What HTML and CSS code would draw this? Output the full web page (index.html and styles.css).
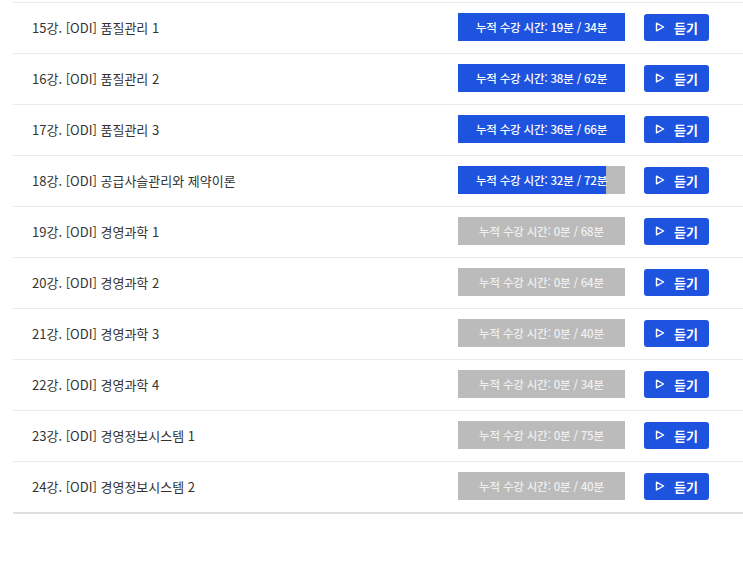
FILE: index.html
```html
<!DOCTYPE html>
<html lang="ko">
<head>
<meta charset="utf-8">
<link rel="stylesheet" href="styles.css">
</head>
<body>
<ul class="list">
  <li class="row"><span class="title">15강. [ODI] 품질관리 1</span><div class="bar"><div class="fill" style="width:100%"></div><span class="bar-text">누적 수강 시간: 19분 / 34분</span></div><button class="play"><svg width="10" height="10" viewBox="0 0 10 10"><path d="M1.5 1.2 L8.6 5 L1.5 8.8 Z" fill="none" stroke="#fff" stroke-width="1.4" stroke-linejoin="round"/></svg><span>듣기</span></button></li>
  <li class="row"><span class="title">16강. [ODI] 품질관리 2</span><div class="bar"><div class="fill" style="width:100%"></div><span class="bar-text">누적 수강 시간: 38분 / 62분</span></div><button class="play"><svg width="10" height="10" viewBox="0 0 10 10"><path d="M1.5 1.2 L8.6 5 L1.5 8.8 Z" fill="none" stroke="#fff" stroke-width="1.4" stroke-linejoin="round"/></svg><span>듣기</span></button></li>
  <li class="row"><span class="title">17강. [ODI] 품질관리 3</span><div class="bar"><div class="fill" style="width:100%"></div><span class="bar-text">누적 수강 시간: 36분 / 66분</span></div><button class="play"><svg width="10" height="10" viewBox="0 0 10 10"><path d="M1.5 1.2 L8.6 5 L1.5 8.8 Z" fill="none" stroke="#fff" stroke-width="1.4" stroke-linejoin="round"/></svg><span>듣기</span></button></li>
  <li class="row"><span class="title">18강. [ODI] 공급사슬관리와 제약이론</span><div class="bar"><div class="fill" style="width:88.6%"></div><span class="bar-text">누적 수강 시간: 32분 / 72분</span></div><button class="play"><svg width="10" height="10" viewBox="0 0 10 10"><path d="M1.5 1.2 L8.6 5 L1.5 8.8 Z" fill="none" stroke="#fff" stroke-width="1.4" stroke-linejoin="round"/></svg><span>듣기</span></button></li>
  <li class="row"><span class="title">19강. [ODI] 경영과학 1</span><div class="bar"><div class="fill" style="width:0%"></div><span class="bar-text dim">누적 수강 시간: 0분 / 68분</span></div><button class="play"><svg width="10" height="10" viewBox="0 0 10 10"><path d="M1.5 1.2 L8.6 5 L1.5 8.8 Z" fill="none" stroke="#fff" stroke-width="1.4" stroke-linejoin="round"/></svg><span>듣기</span></button></li>
  <li class="row"><span class="title">20강. [ODI] 경영과학 2</span><div class="bar"><div class="fill" style="width:0%"></div><span class="bar-text dim">누적 수강 시간: 0분 / 64분</span></div><button class="play"><svg width="10" height="10" viewBox="0 0 10 10"><path d="M1.5 1.2 L8.6 5 L1.5 8.8 Z" fill="none" stroke="#fff" stroke-width="1.4" stroke-linejoin="round"/></svg><span>듣기</span></button></li>
  <li class="row"><span class="title">21강. [ODI] 경영과학 3</span><div class="bar"><div class="fill" style="width:0%"></div><span class="bar-text dim">누적 수강 시간: 0분 / 40분</span></div><button class="play"><svg width="10" height="10" viewBox="0 0 10 10"><path d="M1.5 1.2 L8.6 5 L1.5 8.8 Z" fill="none" stroke="#fff" stroke-width="1.4" stroke-linejoin="round"/></svg><span>듣기</span></button></li>
  <li class="row"><span class="title">22강. [ODI] 경영과학 4</span><div class="bar"><div class="fill" style="width:0%"></div><span class="bar-text dim">누적 수강 시간: 0분 / 34분</span></div><button class="play"><svg width="10" height="10" viewBox="0 0 10 10"><path d="M1.5 1.2 L8.6 5 L1.5 8.8 Z" fill="none" stroke="#fff" stroke-width="1.4" stroke-linejoin="round"/></svg><span>듣기</span></button></li>
  <li class="row"><span class="title">23강. [ODI] 경영정보시스템 1</span><div class="bar"><div class="fill" style="width:0%"></div><span class="bar-text dim">누적 수강 시간: 0분 / 75분</span></div><button class="play"><svg width="10" height="10" viewBox="0 0 10 10"><path d="M1.5 1.2 L8.6 5 L1.5 8.8 Z" fill="none" stroke="#fff" stroke-width="1.4" stroke-linejoin="round"/></svg><span>듣기</span></button></li>
  <li class="row last"><span class="title">24강. [ODI] 경영정보시스템 2</span><div class="bar"><div class="fill" style="width:0%"></div><span class="bar-text dim">누적 수강 시간: 0분 / 40분</span></div><button class="play"><svg width="10" height="10" viewBox="0 0 10 10"><path d="M1.5 1.2 L8.6 5 L1.5 8.8 Z" fill="none" stroke="#fff" stroke-width="1.4" stroke-linejoin="round"/></svg><span>듣기</span></button></li>
</ul>
</body>
</html>
```
FILE: styles.css
```css
html, body {
  margin: 0;
  padding: 0;
  background: #fff;
}
body {
  font-family: "Noto Sans CJK KR", "Noto Sans", sans-serif;
  color: #333;
}
.list {
  list-style: none;
  margin: 2px 0 0 13px;
  padding: 0;
  border-top: 1px solid #eaeaea;
}
.row {
  display: flex;
  align-items: center;
  height: 50px;
  box-sizing: border-box;
  height: 51px;
  border-bottom: 1px solid #eaeaea;
  padding: 0 34px 2px 19px;
}
.row.last {
  border-bottom: 2px solid #e0e0e0;
  height: 52px;
}
.title {
  flex: 1;
  font-size: 13px;
  color: #333;
}
.bar {
  position: relative;
  width: 167px;
  height: 28px;
  background: #bbbbbb;
  display: flex;
  align-items: center;
  justify-content: center;
}
.fill {
  position: absolute;
  left: 0;
  top: 0;
  bottom: 0;
  background: #1e53e0;
}
.bar-text {
  position: relative;
  font-size: 11.5px;
  font-weight: 500;
  color: #fff;
  letter-spacing: -0.2px;
}
.bar-text.dim {
  color: #f0f0f0;
}
.play {
  margin-left: 19px;
  width: 65px;
  height: 27px;
  border: none;
  border-radius: 3px;
  background: #1e53e0;
  color: #fff;
  display: flex;
  align-items: center;
  justify-content: center;
  gap: 9px;
  padding: 0;
  font-family: "Noto Sans CJK KR", sans-serif;
  font-size: 13px;
  font-weight: 700;
}
.play svg {
  display: block;
}
```
